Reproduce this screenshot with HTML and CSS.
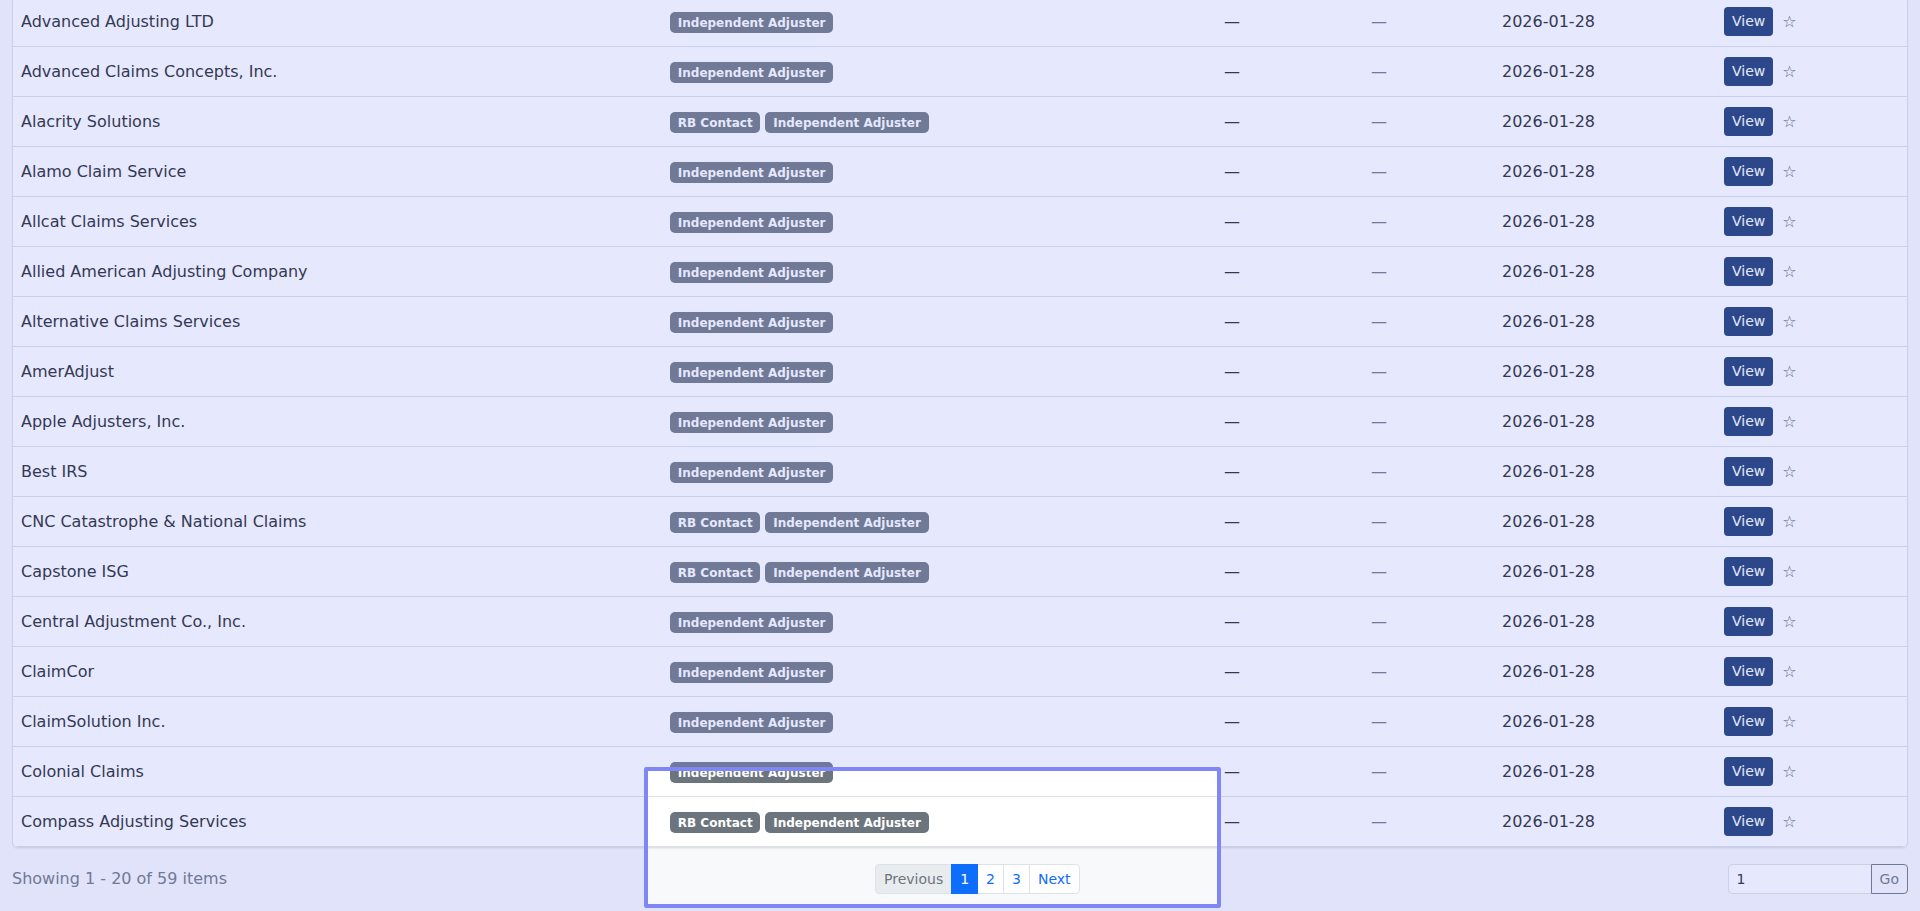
FILE: index.html
```html
<!DOCTYPE html>
<html lang="en">
<head>
<meta charset="utf-8">
<title>Companies</title>
<link rel="stylesheet" href="styles.css">
</head>
<body>
<div class="page">
  <div class="card">
    <table class="list">
      <colgroup>
        <col class="c-name"><col class="c-tags"><col class="c-a"><col class="c-b"><col class="c-date"><col class="c-act">
      </colgroup>
      <tbody>
        <tr><td>Advanced Adjusting LTD</td><td><div class="tags"><span class="badge">Independent Adjuster</span></div></td><td>—</td><td class="muted">—</td><td>2026-01-28</td><td><div class="acts"><span class="btn-view">View</span><span class="star">☆</span></div></td></tr>
        <tr><td>Advanced Claims Concepts, Inc.</td><td><div class="tags"><span class="badge">Independent Adjuster</span></div></td><td>—</td><td class="muted">—</td><td>2026-01-28</td><td><div class="acts"><span class="btn-view">View</span><span class="star">☆</span></div></td></tr>
        <tr><td>Alacrity Solutions</td><td><div class="tags"><span class="badge">RB Contact</span><span class="badge">Independent Adjuster</span></div></td><td>—</td><td class="muted">—</td><td>2026-01-28</td><td><div class="acts"><span class="btn-view">View</span><span class="star">☆</span></div></td></tr>
        <tr><td>Alamo Claim Service</td><td><div class="tags"><span class="badge">Independent Adjuster</span></div></td><td>—</td><td class="muted">—</td><td>2026-01-28</td><td><div class="acts"><span class="btn-view">View</span><span class="star">☆</span></div></td></tr>
        <tr><td>Allcat Claims Services</td><td><div class="tags"><span class="badge">Independent Adjuster</span></div></td><td>—</td><td class="muted">—</td><td>2026-01-28</td><td><div class="acts"><span class="btn-view">View</span><span class="star">☆</span></div></td></tr>
        <tr><td>Allied American Adjusting Company</td><td><div class="tags"><span class="badge">Independent Adjuster</span></div></td><td>—</td><td class="muted">—</td><td>2026-01-28</td><td><div class="acts"><span class="btn-view">View</span><span class="star">☆</span></div></td></tr>
        <tr><td>Alternative Claims Services</td><td><div class="tags"><span class="badge">Independent Adjuster</span></div></td><td>—</td><td class="muted">—</td><td>2026-01-28</td><td><div class="acts"><span class="btn-view">View</span><span class="star">☆</span></div></td></tr>
        <tr><td>AmerAdjust</td><td><div class="tags"><span class="badge">Independent Adjuster</span></div></td><td>—</td><td class="muted">—</td><td>2026-01-28</td><td><div class="acts"><span class="btn-view">View</span><span class="star">☆</span></div></td></tr>
        <tr><td>Apple Adjusters, Inc.</td><td><div class="tags"><span class="badge">Independent Adjuster</span></div></td><td>—</td><td class="muted">—</td><td>2026-01-28</td><td><div class="acts"><span class="btn-view">View</span><span class="star">☆</span></div></td></tr>
        <tr><td>Best IRS</td><td><div class="tags"><span class="badge">Independent Adjuster</span></div></td><td>—</td><td class="muted">—</td><td>2026-01-28</td><td><div class="acts"><span class="btn-view">View</span><span class="star">☆</span></div></td></tr>
        <tr><td>CNC Catastrophe &amp; National Claims</td><td><div class="tags"><span class="badge">RB Contact</span><span class="badge">Independent Adjuster</span></div></td><td>—</td><td class="muted">—</td><td>2026-01-28</td><td><div class="acts"><span class="btn-view">View</span><span class="star">☆</span></div></td></tr>
        <tr><td>Capstone ISG</td><td><div class="tags"><span class="badge">RB Contact</span><span class="badge">Independent Adjuster</span></div></td><td>—</td><td class="muted">—</td><td>2026-01-28</td><td><div class="acts"><span class="btn-view">View</span><span class="star">☆</span></div></td></tr>
        <tr><td>Central Adjustment Co., Inc.</td><td><div class="tags"><span class="badge">Independent Adjuster</span></div></td><td>—</td><td class="muted">—</td><td>2026-01-28</td><td><div class="acts"><span class="btn-view">View</span><span class="star">☆</span></div></td></tr>
        <tr><td>ClaimCor</td><td><div class="tags"><span class="badge">Independent Adjuster</span></div></td><td>—</td><td class="muted">—</td><td>2026-01-28</td><td><div class="acts"><span class="btn-view">View</span><span class="star">☆</span></div></td></tr>
        <tr><td>ClaimSolution Inc.</td><td><div class="tags"><span class="badge">Independent Adjuster</span></div></td><td>—</td><td class="muted">—</td><td>2026-01-28</td><td><div class="acts"><span class="btn-view">View</span><span class="star">☆</span></div></td></tr>
        <tr><td>Colonial Claims</td><td><div class="tags"><span class="badge">Independent Adjuster</span></div></td><td>—</td><td class="muted">—</td><td>2026-01-28</td><td><div class="acts"><span class="btn-view">View</span><span class="star">☆</span></div></td></tr>
        <tr><td>Compass Adjusting Services</td><td><div class="tags"><span class="badge">RB Contact</span><span class="badge">Independent Adjuster</span></div></td><td>—</td><td class="muted">—</td><td>2026-01-28</td><td><div class="acts"><span class="btn-view">View</span><span class="star">☆</span></div></td></tr>
      </tbody>
    </table>
  </div>
  <div class="footer">
    <div class="count">Showing 1 - 20 of 59 items</div>
    <ul class="pager">
      <li class="pg disabled">Previous</li>
      <li class="pg active">1</li>
      <li class="pg">2</li>
      <li class="pg">3</li>
      <li class="pg">Next</li>
    </ul>
    <div class="goto">
      <input class="goto-input" type="text" value="1">
      <span class="goto-btn">Go</span>
    </div>
  </div>
</div>
<div class="spotlight"></div>
</body>
</html>
```

FILE: styles.css
```css
html, body {
  margin: 0;
  height: 911px;
  overflow: hidden;
}
body {
  background: #f8f9fa;
  font-family: "DejaVu Sans", "Noto Sans", sans-serif;
  font-size: 16px;
  color: #212529;
}
.page {
  padding: 0 12px;
}
.card {
  margin-top: -4px;
  background: #fff;
  border: 1px solid #dee2e6;
  border-radius: 6px;
  overflow: hidden;
  box-shadow: 0 1px 2px rgba(0, 0, 0, 0.06);
}
.list {
  width: 100%;
  table-layout: fixed;
  border-collapse: separate;
  border-spacing: 0;
}
.c-name { width: 649px; }
.c-tags { width: 554px; }
.c-a { width: 147px; }
.c-b { width: 131px; }
.c-date { width: 222px; }
.c-act { width: 191px; }
.list tr {
  height: 50px;
}
.list td {
  padding: 0 8px;
  border-bottom: 1px solid #dee2e6;
  vertical-align: middle;
  line-height: 24px;
  white-space: nowrap;
}
.list td.muted {
  color: #6c757d;
}
.tags {
  display: flex;
  gap: 5px;
  padding-top: 2px;
}
.badge {
  display: inline-block;
  background: #6c757d;
  color: #fff;
  font-size: 12px;
  font-weight: 700;
  line-height: 1;
  padding: 4.2px 7.8px;
  border-radius: 5px;
}
.acts {
  display: flex;
  align-items: center;
}
.btn-view {
  display: inline-block;
  background: #17386e;
  color: #fff;
  font-size: 14px;
  line-height: 21px;
  padding: 4px 8px;
  border-radius: 4px;
}
.star {
  margin-left: 9px;
  color: #5c6670;
  font-size: 16px;
  line-height: 21px;
}
.footer {
  margin-top: 16px;
  display: flex;
  justify-content: space-between;
  align-items: center;
}
.count {
  color: #6c757d;
  line-height: 24px;
}
.pager {
  display: flex;
  list-style: none;
  margin: 0;
  padding: 0;
}
.pg {
  font-size: 14px;
  line-height: 20px;
  padding: 4px 8px;
  border: 1px solid #dee2e6;
  background: #fff;
  color: #0d6efd;
  margin-left: -1px;
}
.pg:first-child {
  margin-left: 0;
  border-radius: 4px 0 0 4px;
}
.pg:last-child {
  border-radius: 0 4px 4px 0;
}
.pg.disabled {
  background: #e9ecef;
  color: #6c757d;
}
.pg.active {
  background: #0d6efd;
  border-color: #0d6efd;
  color: #fff;
  position: relative;
}
.goto {
  display: flex;
}
.goto-input {
  box-sizing: border-box;
  width: 144px;
  height: 30px;
  margin: 0;
  padding: 4px 8px;
  border: 1px solid #dee2e6;
  border-radius: 4px 0 0 4px;
  background: #fff;
  font-family: "DejaVu Sans", "Noto Sans", sans-serif;
  font-size: 14px;
  color: #212529;
  outline: none;
}
.goto-btn {
  box-sizing: border-box;
  height: 30px;
  padding: 4px 8px;
  border: 1px solid #6c757d;
  border-radius: 0 4px 4px 0;
  margin-left: -1px;
  color: #6c757d;
  font-size: 14px;
  line-height: 20px;
}
.spotlight {
  position: absolute;
  left: 644px;
  top: 767px;
  width: 577px;
  height: 141px;
  box-sizing: border-box;
  border: 4px solid #7f87f6;
  border-radius: 2px;
  box-shadow: 0 0 0 4000px rgba(129, 140, 248, 0.2);
  pointer-events: none;
}
```
